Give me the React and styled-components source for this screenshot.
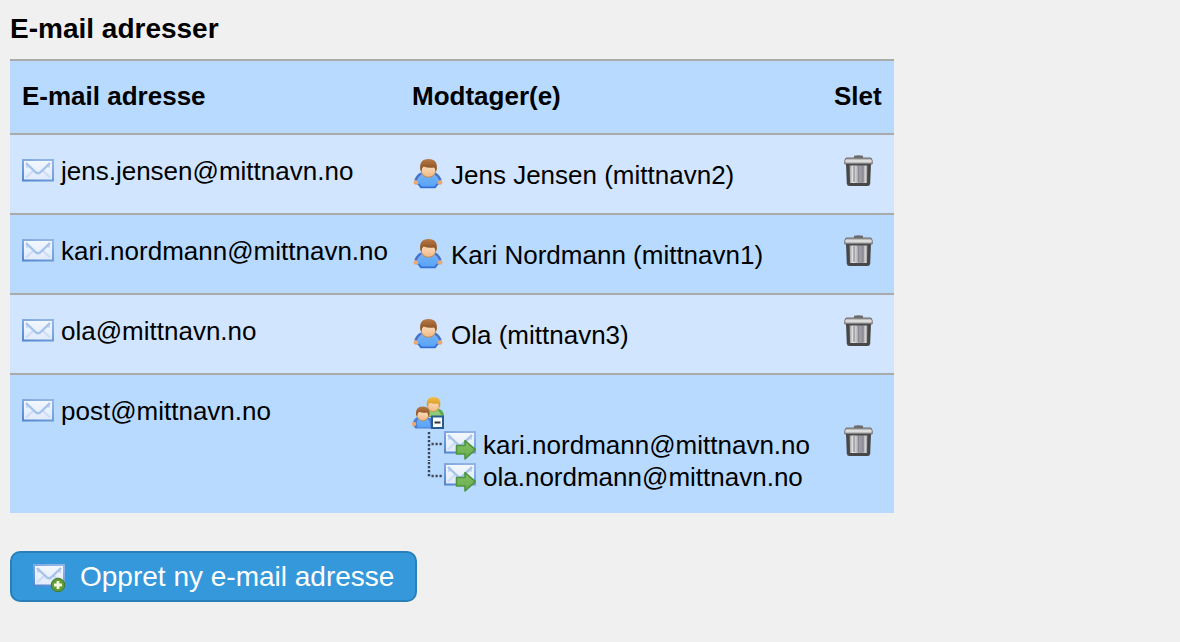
import React, { useState } from "react";
import styled, { createGlobalStyle, css } from "styled-components";

const GlobalStyle = createGlobalStyle`
  body {
    margin: 0;
    background: #f0f0f0;
    color: #000;
    font-family: "Liberation Sans", Arial, sans-serif;
    font-size: 26px;
    line-height: 32px;
  }
`;

const Page = styled.main`
  padding: 13px 10px;
`;

const Title = styled.h1`
  margin: 0 0 14px;
  font-size: 28px;
  line-height: 32px;
`;

const AddressTable = styled.table`
  border-spacing: 0;
  margin-bottom: 38px;
  white-space: nowrap;
`;

const HeadCell = styled.th`
  padding: 19px 12px 21px;
  border-top: 2px solid #aaa;
  background: #b8daff;
  text-align: left;
`;

const Row = styled.tr`
  background: #d1e5ff;
  &:nth-child(even) {
    background: #b8daff;
  }
`;

const Cell = styled.td`
  padding: 20px 12px;
  border-top: 2px solid #aaa;
  vertical-align: ${(props) => (props.$middle ? "middle" : "top")};
`;

const Line = styled.div`
  display: flex;
  gap: 7px;
`;

const Recipients = styled.div`
  padding-top: 2px;
`;

const UserName = styled.span`
  padding: 2px 0;
`;

const Icon = styled.svg`
  display: block;
  flex: none;
  width: 32px;
  height: 32px;
`;

const plainButton = css`
  display: block;
  padding: 0;
  border: 0;
  background: none;
  cursor: pointer;
`;

const ToggleButton = styled.button`
  ${plainButton}
`;

const DeleteButton = styled.button`
  ${plainButton}
  margin: 0 auto;
  padding-bottom: 6px;
`;

const Tree = styled.ul`
  margin: 0;
  padding: 0;
  list-style: none;
`;

const TreeItem = styled.li`
  display: flex;
`;

const CreateButton = styled.button`
  display: flex;
  gap: 15px;
  padding: 7px 21px 6px;
  border: 2px solid #2980b9;
  border-radius: 10px;
  background: #3498db;
  color: #fff;
  font: inherit;
  font-size: 28px;
  line-height: 34px;
  white-space: nowrap;
  cursor: pointer;
`;

const Defs = styled.svg`
  position: absolute;
  width: 0;
  height: 0;
`;

const Gradients = () => (
  <Defs aria-hidden="true">
    <defs>
      <linearGradient id="frame" x1="0" y1="1" x2="0.6" y2="0">
        <stop offset="0" stopColor="#5486cf" />
        <stop offset="1" stopColor="#8fb3e4" />
      </linearGradient>
      <linearGradient id="paper" x1="0" y1="0" x2="0" y2="1">
        <stop offset="0" stopColor="#f4f8ff" />
        <stop offset="1" stopColor="#dfeafb" />
      </linearGradient>
      <linearGradient id="hair" x1="0" y1="0" x2="0" y2="1">
        <stop offset="0" stopColor="#b87a45" />
        <stop offset="1" stopColor="#84491c" />
      </linearGradient>
      <linearGradient id="blond" x1="0" y1="0" x2="0" y2="1">
        <stop offset="0" stopColor="#f3bf45" />
        <stop offset="1" stopColor="#cf9224" />
      </linearGradient>
      <linearGradient id="skin" x1="0" y1="0" x2="0" y2="1">
        <stop offset="0" stopColor="#fde3c6" />
        <stop offset="1" stopColor="#f0b883" />
      </linearGradient>
      <linearGradient id="shirt" x1="0" y1="0" x2="0" y2="1">
        <stop offset="0" stopColor="#6bb1fb" />
        <stop offset="1" stopColor="#5aa2f5" />
      </linearGradient>
      <linearGradient id="bin" x1="0" y1="0" x2="1" y2="0">
        <stop offset="0" stopColor="#9a9a9a" />
        <stop offset="0.2" stopColor="#ececee" />
        <stop offset="0.5" stopColor="#a4a4ac" />
        <stop offset="0.7" stopColor="#95959d" />
        <stop offset="0.9" stopColor="#d2d2d5" />
        <stop offset="1" stopColor="#8a8a8a" />
      </linearGradient>
      <linearGradient id="lid" x1="0" y1="0" x2="0" y2="1">
        <stop offset="0" stopColor="#8a8a8a" />
        <stop offset="0.5" stopColor="#ececec" />
        <stop offset="1" stopColor="#8c8c8c" />
      </linearGradient>
      <linearGradient id="arrow" x1="0" y1="0" x2="0" y2="1">
        <stop offset="0" stopColor="#84c064" />
        <stop offset="1" stopColor="#68ac4c" />
      </linearGradient>
    </defs>
  </Defs>
);

const Envelope = () => (
  <g>
    <rect x="1" y="5" width="30" height="20.5" fill="url(#paper)" stroke="url(#frame)" strokeWidth="2" />
    <path d="M4 22.5 12 15M28 22.5 20 15" fill="none" stroke="#ccdcf5" strokeWidth="2" />
    <path d="M4 8v5l4-1zM28 8v5l-4-1z" fill="#c6d8f4" />
    <path d="M4 8 14 17.500q2 1.600 4 0L28 8" fill="none" stroke="#a8c3eb" strokeWidth="2.4" />
  </g>
);

const MailIcon = () => (
  <Icon viewBox="0 0 32 32" aria-hidden="true">
    <Envelope />
  </Icon>
);

const MailAddIcon = () => (
  <Icon viewBox="0 0 32 32" aria-hidden="true">
    <Envelope />
    <circle cx="25" cy="25" r="6.8" fill="#5f9a38" stroke="#3f7a2a" />
    <path d="M25 21v8M21 25h8" stroke="#f2f8dc" strokeWidth="2.8" />
  </Icon>
);

const MailForwardIcon = () => (
  <Icon viewBox="0 0 32 32" aria-hidden="true">
    <g transform="translate(0 -2)">
      <Envelope />
    </g>
    <path
      d="M12.500 16.500H21v-5l10.300 9.200L21 30v-5h-8.500z"
      fill="url(#arrow)"
      stroke="#4d9440"
      strokeWidth="1.6"
      strokeLinejoin="round"
    />
  </Icon>
);

const UserIcon = () => (
  <Icon viewBox="0 0 32 32" aria-hidden="true">
    <path d="M10 15.500Q4 18 2 25l3 3h22l3-3q-2-7-8-9.500z" fill="#86b0ee" />
    <path d="M9 16.500Q5 19 3.500 23.500M23 16.500q4 2.500 5.500 7" fill="none" stroke="#4672cc" strokeWidth="2.4" />
    <path d="M9.500 18.500q6.500 3 13 0 3.500 3 3.500 8.500l-3 3.500H9L6 27q0-5.500 3.500-8.500z" fill="url(#shirt)" />
    <path d="M6.500 27l2.500 3.300h14l2.500-3.300" fill="none" stroke="#3470d4" strokeWidth="1.800" />
    <circle cx="3.800" cy="25.500" r="2.300" fill="#eda870" />
    <circle cx="28.200" cy="25.500" r="2.300" fill="#eda870" />
    <ellipse cx="16.500" cy="13.500" rx="7.300" ry="6.800" fill="url(#skin)" stroke="#b98355" />
    <path d="M8.300 13Q6.800 2 16.500 2t8.200 11l-1.200 1q0-3-1.500-3.500-5.500 1-10.500-1-2 1-2 4.500z" fill="url(#hair)" />
  </Icon>
);

const GroupIcon = () => (
  <Icon viewBox="0 0 32 32" aria-hidden="true">
    <path d="M15 13q-3 2-3 7h19l1-2q-1-5-5-6z" fill="#5fa84e" />
    <path d="M17 13q4.500 3 9 0l4 6H15z" fill="#8fcb78" />
    <ellipse cx="21.500" cy="8.500" rx="5.800" ry="6" fill="url(#skin)" stroke="#cf9a52" strokeWidth="0.800" />
    <path d="M14.800 9Q13.500 0 21.500 0t6.700 9l-1.200 1q0-3-1.500-3.500-4 .8-7.500-.5-2 .5-2 4z" fill="url(#blond)" />
    <path d="M5 20q-4.500 3-4.500 8l3 3.500h16V21z" fill="#4a7fd6" />
    <path d="M6.500 21.500q5 2.500 9 0 3 3 3 9H6q-2.500-5 .5-9z" fill="url(#shirt)" />
    <circle cx="2" cy="27" r="2.200" fill="#eda870" />
    <ellipse cx="10.800" cy="18" rx="5.900" ry="5.800" fill="url(#skin)" stroke="#b98355" strokeWidth="0.800" />
    <path d="M4 18Q3 9.500 10.800 9.500T17.500 18l-1.200 1q0-3-1.500-3.500-4 .8-7.500-.5-2 .5-2 4z" fill="url(#hair)" />
    <rect x="20" y="19.500" width="11" height="11.500" fill="#fff" stroke="#2b5c8e" strokeWidth="2" />
    <path d="M22.500 25.500h6" stroke="#333" strokeWidth="2" />
  </Icon>
);

const TrashIcon = () => (
  <Icon viewBox="0 0 32 32" aria-hidden="true">
    <path d="M12 3V.8q4.500-1.300 9 0V3z" fill="#6a6a6a" />
    <path d="M4 8h25l-.8 20.500q-.2 2.500-2.700 2.500h-18q-2.500 0-2.700-2.500z" fill="#474747" />
    <path d="M7.500 9.500h18L25 28H8z" fill="url(#bin)" />
    <path d="M12 11v16M16.500 11v16M21 11v16" stroke="#85858e" strokeWidth="1.200" />
    <path d="M4 3h25l1.200 2.500V9H2.800V5.500z" fill="url(#lid)" stroke="#707070" />
    <path d="M4 9.700h25" stroke="#4a4a4a" strokeWidth="1.600" />
  </Icon>
);

const BranchIcon = ({ last }) => (
  <Icon viewBox="0 0 32 32" aria-hidden="true">
    <path
      d={last ? "M17 1v16M19.500 15H31" : "M17 3v30M19.500 15H31"}
      fill="none"
      stroke="#3c4654"
      strokeWidth="2.400"
      strokeDasharray="2.200 1.800"
    />
  </Icon>
);

const addresses = [
  { email: "jens.jensen@mittnavn.no", user: "Jens Jensen (mittnavn2)" },
  { email: "kari.nordmann@mittnavn.no", user: "Kari Nordmann (mittnavn1)" },
  { email: "ola@mittnavn.no", user: "Ola (mittnavn3)" },
  {
    email: "post@mittnavn.no",
    forwards: ["kari.nordmann@mittnavn.no", "ola.nordmann@mittnavn.no"],
  },
];

const ForwardTree = ({ items }) => {
  const [open, setOpen] = useState(true);

  return (
    <>
      <ToggleButton
        type="button"
        aria-label="Modtagere"
        aria-expanded={open}
        onClick={() => setOpen(!open)}
      >
        <GroupIcon />
      </ToggleButton>
      {open && (
        <Tree>
          {items.map((item, index) => (
            <TreeItem key={item}>
              <BranchIcon last={index === items.length - 1} />
              <Line>
                <MailForwardIcon />
                <span>{item}</span>
              </Line>
            </TreeItem>
          ))}
        </Tree>
      )}
    </>
  );
};

const App = () => {
  return (
    <Page>
      <GlobalStyle />
      <Gradients />
      <Title>E-mail adresser</Title>
      <AddressTable>
        <thead>
          <tr>
            <HeadCell scope="col">E-mail adresse</HeadCell>
            <HeadCell scope="col">Modtager(e)</HeadCell>
            <HeadCell scope="col">Slet</HeadCell>
          </tr>
        </thead>
        <tbody>
          {addresses.map(({ email, user, forwards }) => (
            <Row key={email}>
              <Cell>
                <Line>
                  <MailIcon />
                  <span>{email}</span>
                </Line>
              </Cell>
              <Cell>
                <Recipients>
                  {forwards ? (
                    <ForwardTree items={forwards} />
                  ) : (
                    <Line>
                      <UserIcon />
                      <UserName>{user}</UserName>
                    </Line>
                  )}
                </Recipients>
              </Cell>
              <Cell $middle>
                <DeleteButton type="button" aria-label={`Slet ${email}`}>
                  <TrashIcon />
                </DeleteButton>
              </Cell>
            </Row>
          ))}
        </tbody>
      </AddressTable>
      <CreateButton type="button">
        <MailAddIcon />
        <span>Oppret ny e-mail adresse</span>
      </CreateButton>
    </Page>
  );
};

export default App;
